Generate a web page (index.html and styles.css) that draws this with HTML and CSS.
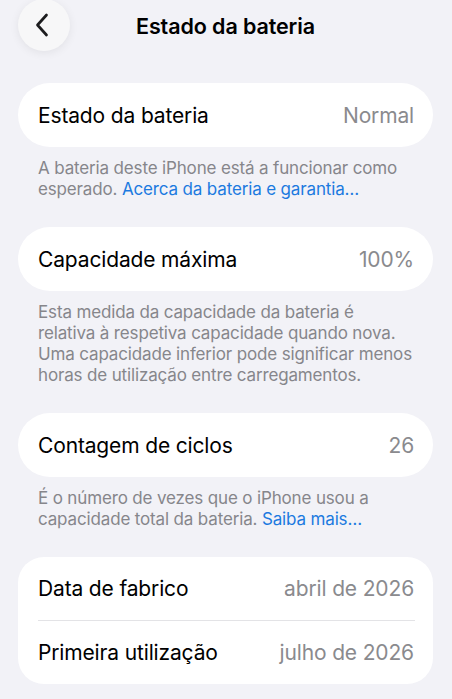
FILE: index.html
```html
<!DOCTYPE html>
<html lang="pt">
<head>
<meta charset="utf-8">
<link rel="stylesheet" href="styles.css">
</head>
<body>
<div class="page">
  <header class="nav">
    <div class="nav-side">
      <button class="back" aria-label="Voltar">
        <svg width="14" height="24" viewBox="0 0 14 24"><path d="M11.5 2 L2.5 12 L11.5 22" fill="none" stroke="#1c1c1e" stroke-width="2.7" stroke-linecap="round" stroke-linejoin="round"/></svg>
      </button>
    </div>
    <h1 class="title">Estado da bateria</h1>
    <div class="nav-side"></div>
  </header>

  <section class="group first">
    <div class="card pill">
      <div class="row"><span class="label">Estado da bateria</span><span class="value">Normal</span></div>
    </div>
    <p class="footer">A bateria deste iPhone está a funcionar como esperado. <span class="link">Acerca da bateria e garantia…</span></p>
  </section>

  <section class="group">
    <div class="card pill">
      <div class="row"><span class="label">Capacidade máxima</span><span class="value">100%</span></div>
    </div>
    <p class="footer">Esta medida da capacidade da bateria é relativa à respetiva capacidade quando nova. Uma capacidade inferior pode significar menos horas de utilização entre carregamentos.</p>
  </section>

  <section class="group">
    <div class="card pill">
      <div class="row"><span class="label">Contagem de ciclos</span><span class="value">26</span></div>
    </div>
    <p class="footer">É o número de vezes que o iPhone usou a capacidade total da bateria. <span class="link">Saiba mais…</span></p>
  </section>

  <section class="group">
    <div class="card rounded">
      <div class="row"><span class="label">Data de fabrico</span><span class="value">abril de 2026</span></div>
      <div class="sep"></div>
      <div class="row"><span class="label">Primeira utilização</span><span class="value">julho de 2026</span></div>
    </div>
  </section>
</div>
</body>
</html>
```

FILE: styles.css
```css
html, body {
  margin: 0;
  padding: 0;
  background: #f2f2f7;
}
body {
  font-family: Inter, "Noto Sans", sans-serif;
  color: #000;
  -webkit-font-smoothing: antialiased;
}
.page {
  padding: 0 19px 0 18px;
}
.nav {
  display: grid;
  grid-template-columns: 1fr auto 1fr;
  align-items: center;
  height: 51px;
}
.back {
  width: 52px;
  height: 52px;
  border-radius: 50%;
  border: none;
  background: #f7f7f8;
  box-shadow: 0 2px 10px rgba(0,0,0,0.07);
  display: flex;
  align-items: center;
  justify-content: center;
  padding: 0 4px 0 0;
  margin-top: -2px;
}
.title {
  margin: 0;
  font-size: 21.5px;
  font-weight: 600;
  letter-spacing: -0.1px;
  padding-top: 1px;
}
.group.first {
  margin-top: 32px;
}
.group {
  margin-top: 27px;
}
.card {
  background: #fff;
}
.pill {
  border-radius: 32px;
}
.pill .row {
  height: 64px;
}
.rounded {
  border-radius: 26px;
}
.row {
  display: flex;
  justify-content: space-between;
  align-items: center;
  height: 63px;
  padding: 0 19px 0 20px;
}
.label {
  font-size: 21px;
  letter-spacing: -0.15px;
}
.value {
  font-size: 21px;
  color: #8a8a8e;
  letter-spacing: -0.15px;
}
.sep {
  height: 1px;
  background: #e3e3e6;
  margin-left: 20px;
  margin-right: 18px;
}
.footer {
  margin: 0;
  padding: 11px 20px 0 20px;
  font-size: 17px;
  line-height: 21px;
  color: #86868b;
  letter-spacing: -0.15px;
}
.link {
  color: #1c7ae0;
}
```
